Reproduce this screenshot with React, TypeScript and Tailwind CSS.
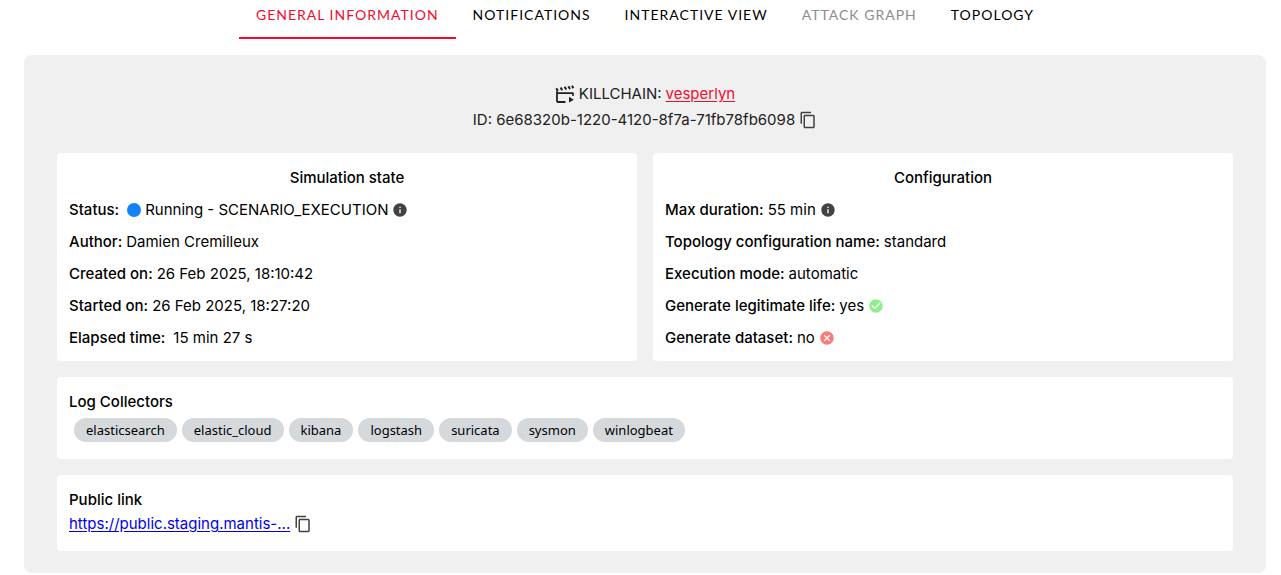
import type { ReactNode } from "react";
import { MdCancel, MdCheckCircle, MdContentCopy, MdInfo } from "react-icons/md";

interface Tab {
  label: string;
  active?: boolean;
  disabled?: boolean;
}

const TABS: Tab[] = [
  { label: "General information", active: true },
  { label: "Notifications" },
  { label: "Interactive view" },
  { label: "Attack graph", disabled: true },
  { label: "Topology" },
];

const COLLECTORS = [
  "elasticsearch",
  "elastic_cloud",
  "kibana",
  "logstash",
  "suricata",
  "sysmon",
  "winlogbeat",
];

function tabColor(tab: Tab): string {
  if (tab.active) return "border-[#f50a2f] text-[#f50a2f]";
  if (tab.disabled) return "border-transparent text-[#8c8c8c]";
  return "border-transparent text-black";
}

function ClapperIcon() {
  return (
    <svg width="20" height="20" viewBox="0 0 20 20" fill="none" stroke="#212121" aria-hidden="true">
      <path d="M10.5 18H3a1 1 0 0 1-1-1V9.2h16.4" strokeWidth="1.8" />
      <path d="M18 9v3M2 9V6.5" strokeWidth="1.6" />
      <path d="M1.2 4.2l1.8 2.6M5.6 3.4l1.6 2.8M9.6 2.8l1.6 2.8M13.4 2.2L15 5M17 1.8l1.4 2.4" strokeWidth="2" />
      <path d="M14 12.8l4.8 2.9-4.8 2.9z" fill="#212121" stroke="none" />
    </svg>
  );
}

function CopyButton({ label }: { label: string }) {
  return (
    <button type="button" aria-label={label} className="shrink-0 text-[#424242]">
      <MdContentCopy size={18} />
    </button>
  );
}

function Row({ label, children }: { label: string; children: ReactNode }) {
  return (
    <div className="flex h-8 items-center gap-1">
      <dt className="font-medium">{label}:</dt>
      <dd className="flex items-center gap-1">{children}</dd>
    </div>
  );
}

function Card({ title, children }: { title: string; children: ReactNode }) {
  return (
    <section className="rounded bg-white px-3 pt-[9px] pb-[7px]">
      <h2 className="text-center leading-8 font-medium">{title}</h2>
      <dl>{children}</dl>
    </section>
  );
}

export default function App() {
  return (
    <div className="pr-[15px] pl-6 font-['Inter',sans-serif] text-[15px] leading-6 text-black">
      <nav className="flex justify-center">
        {TABS.map((tab) => (
          <button
            key={tab.label}
            type="button"
            disabled={tab.disabled}
            className={`h-[39px] border-b-2 px-[17px] pb-2 font-['Lato',sans-serif] text-[14px] tracking-[1px] uppercase ${tabColor(tab)}`}
          >
            {tab.label}
          </button>
        ))}
      </nav>

      <main className="mt-4 rounded-lg bg-[#f0f0f0] px-[33px] pt-[25px] pb-[22px]">
        <header className="mb-[21px] text-[#212121]">
          <div className="flex h-7 items-center justify-center gap-1">
            <ClapperIcon />
            <span>KILLCHAIN:</span>
            <a href="#killchain" className="text-[#f50a2f] underline underline-offset-2">
              vesperlyn
            </a>
          </div>
          <div className="flex items-center justify-center gap-1">
            <span>ID: 6e68320b-1220-4120-8f7a-71fb78fb6098</span>
            <CopyButton label="Copy ID" />
          </div>
        </header>

        <div className="grid grid-cols-2 gap-4">
          <Card title="Simulation state">
            <Row label="Status">
              <span className="ml-1 size-3.5 rounded-full bg-[#1482fa]" />
              Running - SCENARIO_EXECUTION
              <MdInfo size={16} color="#424242" />
            </Row>
            <Row label="Author">Damien Cremilleux</Row>
            <Row label="Created on">26 Feb 2025, 18:10:42</Row>
            <Row label="Started on">26 Feb 2025, 18:27:20</Row>
            <Row label="Elapsed time">
              <span className="ml-1">15 min 27 s</span>
            </Row>
          </Card>
          <Card title="Configuration">
            <Row label="Max duration">
              55 min
              <MdInfo size={16} color="#424242" />
            </Row>
            <Row label="Topology configuration name">standard</Row>
            <Row label="Execution mode">automatic</Row>
            <Row label="Generate legitimate life">
              yes
              <MdCheckCircle size={16} color="#90ee90" />
            </Row>
            <Row label="Generate dataset">
              no
              <MdCancel size={16} color="#f97c7c" />
            </Row>
          </Card>
        </div>

        <section className="mt-4 rounded bg-white p-3">
          <h2 className="leading-[26px] font-medium">Log Collectors</h2>
          <ul className="flex flex-wrap gap-[5px] px-[5px] pt-[3px] pb-[5px]">
            {COLLECTORS.map((name) => (
              <li key={name} className="rounded-full bg-[#d5d9dc] px-3 font-['Noto_Sans',sans-serif] text-[13px]">
                {name}
              </li>
            ))}
          </ul>
        </section>

        <section className="mt-4 rounded bg-white px-3 pt-3 pb-4">
          <h2 className="leading-[26px] font-medium">Public link</h2>
          <div className="flex h-[22px] items-center gap-1">
            <a href="#public" className="text-[#0000ee] underline underline-offset-2">
              https://public.staging.mantis-...
            </a>
            <CopyButton label="Copy public link" />
          </div>
        </section>
      </main>
    </div>
  );
}
